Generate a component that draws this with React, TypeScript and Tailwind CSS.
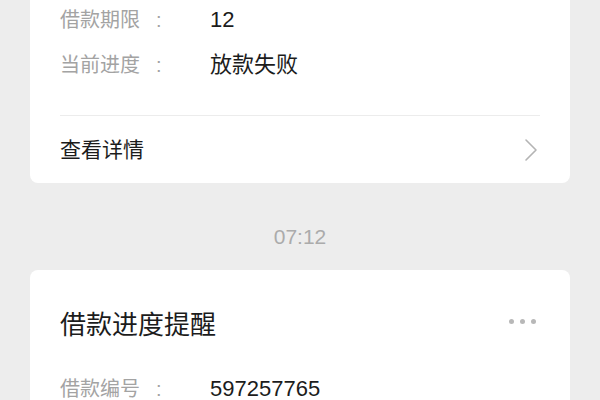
import React from "react";

const font = { fontFamily: '"Liberation Sans", "Noto Sans CJK SC", sans-serif' };

function Row({ label, value }: { label: string; value: string }) {
  return (
    <div className="flex h-[45px] items-center">
      <div className="flex w-[150px] text-[20px] leading-none text-[#a3a3a3]">
        <span>{label}</span>
        <span className="ml-[16px]">:</span>
      </div>
      <div className="text-[22px] leading-none text-[#1c1c1c]">{value}</div>
    </div>
  );
}

export default function App() {
  return (
    <div className="h-[400px] w-[600px] overflow-hidden bg-[#ededed] px-[30px]" style={font}>
      <div className="mt-[-3px] rounded-b-[8px] bg-white">
        <div className="px-[30px] pb-[28px]">
          <Row label="借款期限" value="12" />
          <Row label="当前进度" value="放款失败" />
        </div>
        <div className="mx-[30px] h-px bg-[#ececec]" />
        <div className="flex h-[67px] items-center justify-between pl-[30px] pr-[32px]">
          <span className="text-[21px] leading-none text-[#1c1c1c]">查看详情</span>
          <svg width="14" height="24" viewBox="0 0 14 24" fill="none">
            <path d="M2 2 L12 12 L2 22" stroke="#b4b4b4" strokeWidth="1.6" strokeLinecap="round" strokeLinejoin="round" />
          </svg>
        </div>
      </div>
      <div className="pb-[23px] pt-[44px] text-center text-[21px] leading-[20px] text-[#ababab]">07:12</div>
      <div className="h-[200px] rounded-[8px] bg-white px-[30px] pt-[39px]">
        <div className="flex h-[32px] items-center justify-between">
          <span className="text-[26px] leading-none text-[#1c1c1c]">借款进度提醒</span>
          <div className="mb-[8px] mr-[4px] flex items-center gap-[6px]">
            <span className="h-[5px] w-[5px] rounded-full bg-[#b8b8b8]" />
            <span className="h-[5px] w-[5px] rounded-full bg-[#b8b8b8]" />
            <span className="h-[5px] w-[5px] rounded-full bg-[#b8b8b8]" />
          </div>
        </div>
        <div className="mt-[25px]">
          <Row label="借款编号" value="597257765" />
        </div>
      </div>
    </div>
  );
}
